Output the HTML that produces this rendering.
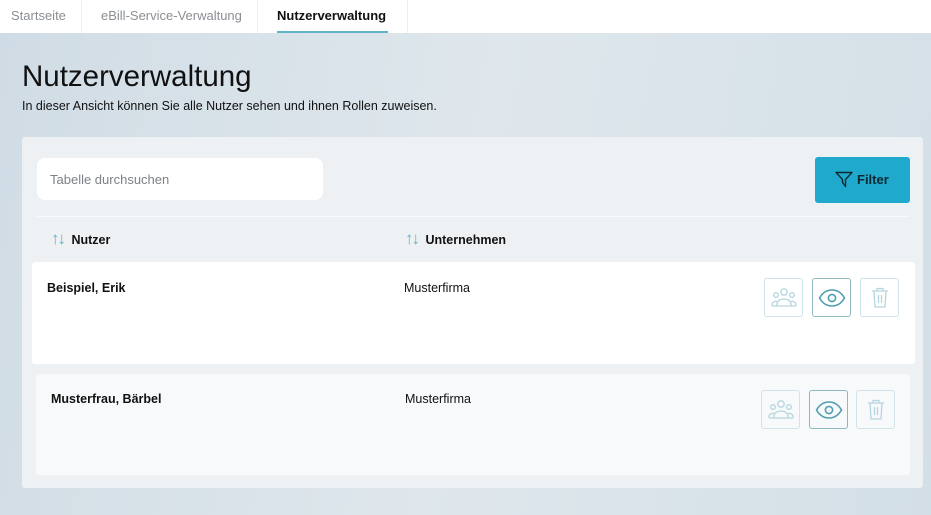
<!DOCTYPE html>
<html><head><meta charset="utf-8"><style>
*{margin:0;padding:0;box-sizing:border-box}
body{width:931px;height:515px;overflow:hidden;font-family:"Liberation Sans",sans-serif;background:linear-gradient(100deg,#d0dce5 0%,#dfe7ec 50%,#d3dfe7 100%);position:relative;color:#111}
.tabs{position:absolute;left:0;top:0;width:931px;height:33px;background:#fff}
.tab{position:absolute;top:8px;font-size:13px;color:#8a8f94}
.sep{position:absolute;top:0;width:1px;height:33px;background:#eceff1}
.abs{position:absolute}
.btn{position:absolute;width:39px;height:39px;border:1.5px solid #cfe3e8;border-radius:3px;display:flex;align-items:center;justify-content:center}
.btn.eye{border-color:#8fb8c2}
.arr{color:#5fb4c8;font-weight:normal;font-size:17px;letter-spacing:-2px;margin-right:4px}
</style></head><body>
<div class="tabs">
<div class="tab" style="left:11px">Startseite</div>
<div class="sep" style="left:81px"></div>
<div class="tab" style="left:101px">eBill-Service-Verwaltung</div>
<div class="sep" style="left:257px"></div>
<div class="tab" style="left:277px;color:#111;font-weight:bold">Nutzerverwaltung</div>
<div class="abs" style="left:277px;top:31px;width:111px;height:2px;background:#5fb4c8"></div>
<div class="sep" style="left:407px"></div>
</div>
<div class="abs" style="left:22px;top:60px;font-size:29.5px;color:#111">Nutzerverwaltung</div>
<div class="abs" style="left:22px;top:99px;font-size:12.5px">In dieser Ansicht können Sie alle Nutzer sehen und ihnen Rollen zuweisen.</div>
<div class="abs" style="left:22px;top:137px;width:901px;height:351px;background:#edf1f4;border-radius:3px"></div>
<div class="abs" style="left:37px;top:158px;width:286px;height:42px;background:#fff;border-radius:8px;font-size:13px;color:#7d8286;padding:14px 0 0 13px">Tabelle durchsuchen</div>
<div class="abs" style="left:815px;top:157px;width:95px;height:46px;background:#1fa9cc;border-radius:3px;font-size:13px;font-weight:bold;color:#0d2a33;padding:15px 0 0 20px">
<svg width="18" height="17" viewBox="0 0 18 17" style="position:absolute;left:20px;top:14px"><path d="M1 1.5h16l-6.5 7v7l-3-4v-3z" fill="none" stroke="#0d2a33" stroke-width="1.4" stroke-linejoin="round"/></svg><span style="margin-left:22px">Filter</span></div>
<div class="abs" style="left:37px;top:216px;width:873px;height:1px;background:#f8fafb"></div>
<div class="abs" style="left:51px;top:229px;font-size:12.5px;font-weight:bold"><span class="arr">↑↓</span> Nutzer</div>
<div class="abs" style="left:405px;top:229px;font-size:12.5px;font-weight:bold"><span class="arr">↑↓</span> Unternehmen</div>
<div class="abs" style="left:32px;top:262px;width:883px;height:102px;background:#fff;border-radius:3px"></div>
<div class="abs" style="left:36px;top:374px;width:874px;height:101px;background:#f7f9fa;border-radius:3px"></div>
<div class="abs" style="left:47px;top:281px;font-size:12.5px;font-weight:bold">Beispiel, Erik</div>
<div class="abs" style="left:404px;top:281px;font-size:12.5px">Musterfirma</div>
<div class="abs" style="left:51px;top:392px;font-size:12.5px;font-weight:bold">Musterfrau, Bärbel</div>
<div class="abs" style="left:405px;top:392px;font-size:12.5px">Musterfirma</div>
<div class="btn" style="left:764px;top:278px"><svg width="26" height="22" viewBox="0 0 26 22" fill="none" stroke="#b5d6de" stroke-width="1.3"><circle cx="13" cy="5" r="3.2"/><circle cx="5" cy="8" r="2.3"/><circle cx="21" cy="8" r="2.3"/><path d="M6 19v-2a7 5 0 0 1 14 0v2z"/><path d="M1 19v-2a4 3 0 0 1 5-2.5M25 19v-2a4 3 0 0 0-5-2.5M1 19h5M20 19h5"/></svg></div>
<div class="btn eye" style="left:812px;top:278px"><svg width="28" height="18" viewBox="0 0 28 18" fill="none" stroke="#4f9fb2" stroke-width="1.6"><path d="M1.5 9C5 3 9 1 14 1s9 2 12.5 8C23 15 19 17 14 17S5 15 1.5 9z"/><circle cx="14" cy="9" r="3.6"/></svg></div>
<div class="btn" style="left:860px;top:278px"><svg width="18" height="22" viewBox="0 0 18 22" fill="none" stroke="#b5d6de" stroke-width="1.3"><path d="M1 4h16M6 4V1.5h6V4M3 4l1 16h10l1-16M7.5 8v8M10.5 8v8"/></svg></div>
<div class="btn" style="left:761px;top:390px"><svg width="26" height="22" viewBox="0 0 26 22" fill="none" stroke="#b5d6de" stroke-width="1.3"><circle cx="13" cy="5" r="3.2"/><circle cx="5" cy="8" r="2.3"/><circle cx="21" cy="8" r="2.3"/><path d="M6 19v-2a7 5 0 0 1 14 0v2z"/><path d="M1 19v-2a4 3 0 0 1 5-2.5M25 19v-2a4 3 0 0 0-5-2.5M1 19h5M20 19h5"/></svg></div>
<div class="btn eye" style="left:809px;top:390px"><svg width="28" height="18" viewBox="0 0 28 18" fill="none" stroke="#4f9fb2" stroke-width="1.6"><path d="M1.5 9C5 3 9 1 14 1s9 2 12.5 8C23 15 19 17 14 17S5 15 1.5 9z"/><circle cx="14" cy="9" r="3.6"/></svg></div>
<div class="btn" style="left:856px;top:390px"><svg width="18" height="22" viewBox="0 0 18 22" fill="none" stroke="#b5d6de" stroke-width="1.3"><path d="M1 4h16M6 4V1.5h6V4M3 4l1 16h10l1-16M7.5 8v8M10.5 8v8"/></svg></div>
</body></html>
